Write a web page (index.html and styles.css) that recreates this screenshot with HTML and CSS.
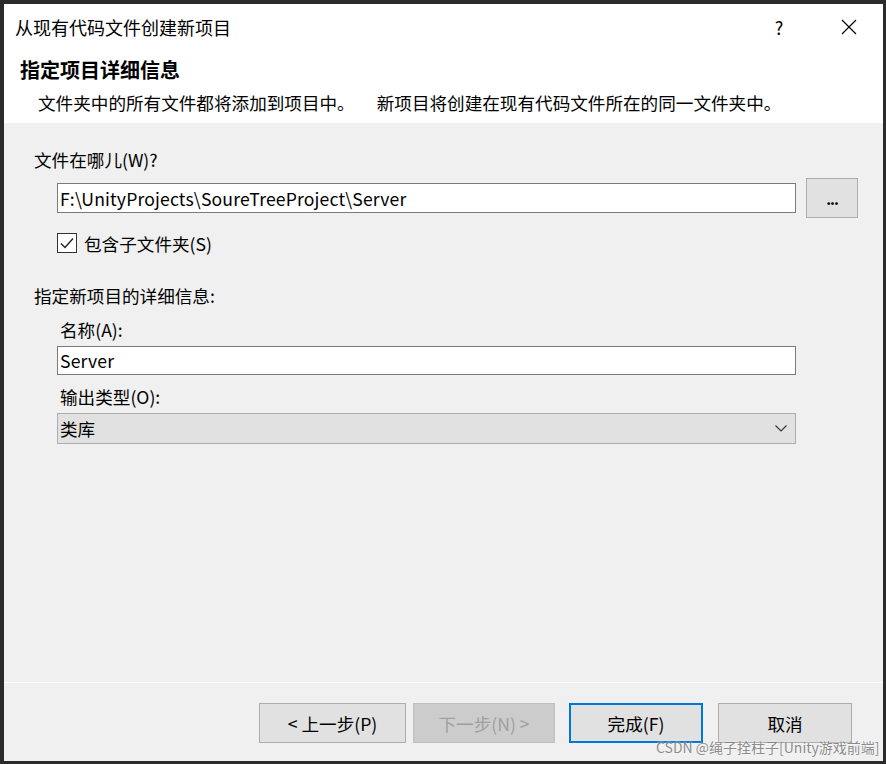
FILE: index.html
```html
<!DOCTYPE html>
<html lang="zh-CN">
<head>
<meta charset="utf-8">
<title>从现有代码文件创建新项目</title>
<link rel="stylesheet" href="styles.css">
</head>
<body>
<div class="window">
  <div class="header">
    <div class="titlebar">
      <span class="title">从现有代码文件创建新项目</span>
      <span class="help">?</span>
      <span class="close"><svg width="16" height="16" viewBox="0 0 16 16"><path d="M1 1 L15 15 M15 1 L1 15" stroke="#000" stroke-width="1.2" fill="none"/></svg></span>
    </div>
    <div class="heading">指定项目详细信息</div>
    <div class="desc"><span>文件夹中的所有文件都将添加到项目中。</span><span class="desc2">新项目将创建在现有代码文件所在的同一文件夹中。</span></div>
  </div>
  <div class="content">
    <div class="label">文件在哪儿(W)?</div>
    <div class="pathrow">
      <div class="input path">F:\UnityProjects\SoureTreeProject\Server</div>
      <div class="browse">...</div>
    </div>
    <div class="checkrow">
      <span class="checkbox"><svg width="20" height="20" viewBox="0 0 20 20"><rect x="0.5" y="0.5" width="19" height="19" fill="#fff" stroke="#333"/><path d="M4 10.5 L8 14.5 L16 5.5" stroke="#222" stroke-width="1.4" fill="none"/></svg></span>
      <span class="checklabel">包含子文件夹(S)</span>
    </div>
    <div class="label section">指定新项目的详细信息:</div>
    <div class="label sub">名称(A):</div>
    <div class="input name">Server</div>
    <div class="label sub type">输出类型(O):</div>
    <div class="combo"><span>类库</span><svg width="12" height="7" viewBox="0 0 12 7"><path d="M0.5 0.5 L6 6 L11.5 0.5" stroke="#333" stroke-width="1.1" fill="none"/></svg></div>
  </div>
  <div class="footer">
    <div class="btn prev">&lt; 上一步(P)</div>
    <div class="btn next disabled">下一步(N) &gt;</div>
    <div class="btn finish">完成(F)</div>
    <div class="btn cancel">取消</div>
  </div>
</div>
<div class="watermark">CSDN @绳子拴柱子[Unity游戏前端]</div>
</body>
</html>
```
FILE: styles.css
```css
html, body {
  margin: 0;
  padding: 0;
}
body {
  background: #2b2b2b;
  width: 886px;
  height: 764px;
  overflow: hidden;
  position: relative;
  font-family: "Noto Sans CJK SC", "Microsoft YaHei", sans-serif;
  font-size: 17.6px;
  color: #000;
}
.window {
  position: absolute;
  left: 4px;
  top: 4px;
  width: 879px;
  height: 757px;
  background: #f0f0f0;
  display: flex;
  flex-direction: column;
}
.header {
  background: #fff;
  height: 119px;
  box-sizing: border-box;
}
.titlebar {
  height: 46px;
  display: flex;
  align-items: center;
  padding-left: 11px;
}
.title {
  font-size: 18px;
  flex: 1;
}
.help {
  font-size: 18px;
  width: 20px;
  margin-right: 52px;
  text-align: center;
}
.close {
  display: flex;
  margin-right: 26px;
}
.heading {
  font-size: 20px;
  font-weight: bold;
  line-height: 24px;
  margin-top: 8px;
  padding-left: 16px;
}
.desc {
  line-height: 24px;
  margin-top: 9px;
  padding-left: 34px;
}
.desc2 {
  margin-left: 22px;
}
.content {
  flex: 1;
  padding: 25px 0 0 30px;
  border-bottom: 1px solid #fff;
}
.label {
  line-height: 24px;
}
.pathrow {
  display: flex;
  align-items: center;
  margin-top: 6px;
  margin-left: 23px;
  height: 40px;
}
.input {
  width: 739px;
  box-sizing: border-box;
  background: #fff;
  border: 1px solid #7a7a7a;
  padding-left: 2px;
  display: flex;
  align-items: center;
  letter-spacing: 0.15px;
}
.path {
  height: 30px;
}
.browse {
  width: 52px;
  height: 40px;
  box-sizing: border-box;
  margin-left: 10px;
  background: #e1e1e1;
  border: 1px solid #adadad;
  display: flex;
  align-items: center;
  justify-content: center;
  font-size: 15px;
  font-weight: bold;
  letter-spacing: -1px;
}
.checkrow {
  display: flex;
  align-items: center;
  margin-left: 23px;
  margin-top: 15px;
  height: 20px;
}
.checkbox {
  display: flex;
  width: 20px;
  height: 20px;
}
.checklabel {
  margin-left: 7px;
}
.section {
  margin-top: 31px;
}
.sub {
  margin-left: 26px;
  margin-top: 10px;
}
.name {
  margin-left: 23px;
  margin-top: 4px;
  height: 29px;
}
.type {
  margin-top: 10px;
}
.combo {
  margin-left: 23px;
  margin-top: 4px;
  width: 739px;
  height: 31px;
  box-sizing: border-box;
  background: #e1e1e1;
  border: 1px solid #adadad;
  display: flex;
  align-items: center;
  justify-content: space-between;
  padding: 0 8px 0 2px;
}
.footer {
  height: 78px;
  display: flex;
  justify-content: flex-end;
  align-items: flex-start;
  padding: 20px 31px 0 0;
  box-sizing: border-box;
}
.btn {
  height: 40px;
  box-sizing: border-box;
  background: #e1e1e1;
  border: 1px solid #adadad;
  display: flex;
  align-items: center;
  justify-content: center;
}
.prev {
  width: 147px;
}
.next {
  width: 142px;
  margin-left: 7px;
}
.disabled {
  background: #cccccc;
  border-color: #bfbfbf;
  color: #a0a0a0;
}
.finish {
  width: 134px;
  margin-left: 14px;
  border: 2px solid #0078d7;
}
.cancel {
  width: 134px;
  margin-left: 15px;
}
.watermark {
  position: absolute;
  left: 656px;
  top: 737px;
  font-size: 14px;
  line-height: 20px;
  color: rgba(110, 110, 110, 0.8);
  text-shadow: 0 0 2px rgba(255, 255, 255, 0.9);
  white-space: nowrap;
}
```
